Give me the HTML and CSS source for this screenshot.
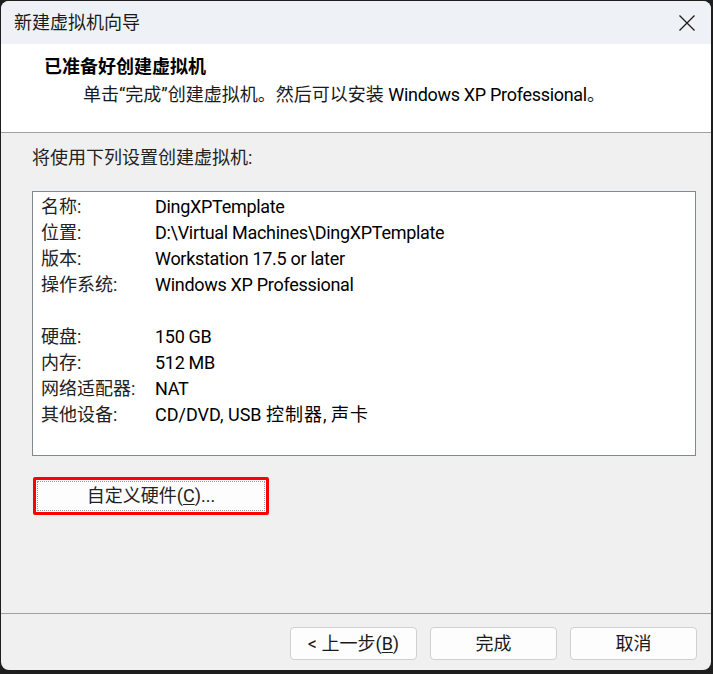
FILE: index.html
```html
<!DOCTYPE html>
<html lang="zh-CN">
<head>
<meta charset="utf-8">
<title>新建虚拟机向导</title>
<link rel="stylesheet" href="styles.css">
</head>
<body>
<div class="window">
  <div class="titlebar">
    <span class="title">新建虚拟机向导</span>
    <svg class="close" width="18" height="18" viewBox="0 0 18 18"><path d="M1.5 1.5 L16.5 16.5 M16.5 1.5 L1.5 16.5" stroke="#1b1b1b" stroke-width="1.3" fill="none"/></svg>
  </div>
  <div class="header">
    <div class="h-title">已准备好创建虚拟机</div>
    <div class="h-sub">单击“完成”创建虚拟机。然后可以安装 <span class="lat">Windows XP Professional</span>。</div>
  </div>
  <div class="content">
    <div class="intro">将使用下列设置创建虚拟机:</div>
    <div class="summary">
      <div class="row"><span class="k">名称:</span><span class="v lat">DingXPTemplate</span></div>
      <div class="row"><span class="k">位置:</span><span class="v lat">D:\Virtual Machines\DingXPTemplate</span></div>
      <div class="row"><span class="k">版本:</span><span class="v lat">Workstation 17.5 or later</span></div>
      <div class="row"><span class="k">操作系统:</span><span class="v lat">Windows XP Professional</span></div>
      <div class="row"></div>
      <div class="row"><span class="k">硬盘:</span><span class="v lat">150 GB</span></div>
      <div class="row"><span class="k">内存:</span><span class="v lat">512 MB</span></div>
      <div class="row"><span class="k">网络适配器:</span><span class="v lat">NAT</span></div>
      <div class="row"><span class="k">其他设备:</span><span class="v">CD/DVD, USB <span class="cjk">控制器</span>, <span class="cjk">声卡</span></span></div>
    </div>
    <div class="custom-wrap">
      <div class="custom-btn"><span class="focus">自定义硬件(<u>C</u>)...</span></div>
    </div>
  </div>
  <div class="footer">
    <div class="btn">&lt; 上一步(<u>B</u>)</div>
    <div class="btn">完成</div>
    <div class="btn">取消</div>
  </div>
</div>
</body>
</html>
```

FILE: styles.css
```css
html, body {
  margin: 0;
  padding: 0;
  background: #1e1e1e;
}
body {
  width: 713px;
  height: 674px;
  overflow: hidden;
  font-family: Roboto, "Noto Sans CJK SC", sans-serif;
  font-size: 18px;
  color: #1a1a1a;
}
.window {
  margin: 1px 2px 4px 1px;
  width: 710px;
  height: 669px;
  border-radius: 8px;
  overflow: hidden;
  background: #f0f0f0;
  display: flex;
  flex-direction: column;
}
.titlebar {
  height: 43px;
  flex: none;
  background: #eef2f6;
  display: flex;
  align-items: center;
  justify-content: space-between;
  padding: 0 15px 0 13px;
}
.title {
  font-size: 18px;
  line-height: 24px;
  color: #1a1a1a;
}
.close {
  display: block;
}
.header {
  height: 88px;
  flex: none;
  background: #ffffff;
  border-bottom: 1px solid #a0a0a0;
  box-sizing: content-box;
}
.h-title {
  padding: 11px 0 0 43px;
  font-weight: bold;
  line-height: 24px;
  color: #000;
}
.h-sub {
  padding: 4px 0 0 82px;
  line-height: 24px;
  color: #1a1a1a;
}
.lat {
  letter-spacing: -0.3px;
  color: #000;
}
.cjk {
  letter-spacing: 1px;
}
.content {
  flex: 1;
  padding: 0 0 0 31px;
}
.intro {
  padding-top: 13px;
  line-height: 24px;
  color: #222;
}
.summary {
  margin-top: 21px;
  background: #fff;
  border: 1px solid #828790;
  padding: 2px 0 0 8px;
  box-sizing: border-box;
  width: 664px;
  height: 265px;
}
.row {
  display: flex;
  height: 26px;
  line-height: 26px;
}
.k {
  width: 114px;
  color: #222;
}
.v {
  color: #000;
}
.custom-wrap {
  margin-top: 21px;
  margin-left: 1px;
}
.custom-btn {
  width: 236px;
  height: 38px;
  box-sizing: border-box;
  border: 3px solid #ff0000;
  border-radius: 2px;
  background: #fdfdfd;
  display: flex;
  align-items: center;
  justify-content: center;
  padding: 1px;
}
.focus {
  flex: 1;
  align-self: stretch;
  display: flex;
  align-items: center;
  justify-content: center;
  border: 1px dotted #999;
  line-height: 24px;
  color: #222;
}
.footer {
  flex: none;
  height: 57px;
  box-sizing: border-box;
  border-top: 1px solid #a0a0a0;
  display: flex;
  justify-content: flex-end;
  align-items: flex-start;
  gap: 13px;
  padding: 13px 14px 0 0;
}
.btn {
  width: 127px;
  height: 33px;
  box-sizing: border-box;
  border: 1px solid #d0d0d0;
  border-radius: 4px;
  background: #fdfdfd;
  display: flex;
  align-items: center;
  justify-content: center;
  line-height: 24px;
  color: #1a1a1a;
}
u {
  text-underline-offset: 2px;
}
```
